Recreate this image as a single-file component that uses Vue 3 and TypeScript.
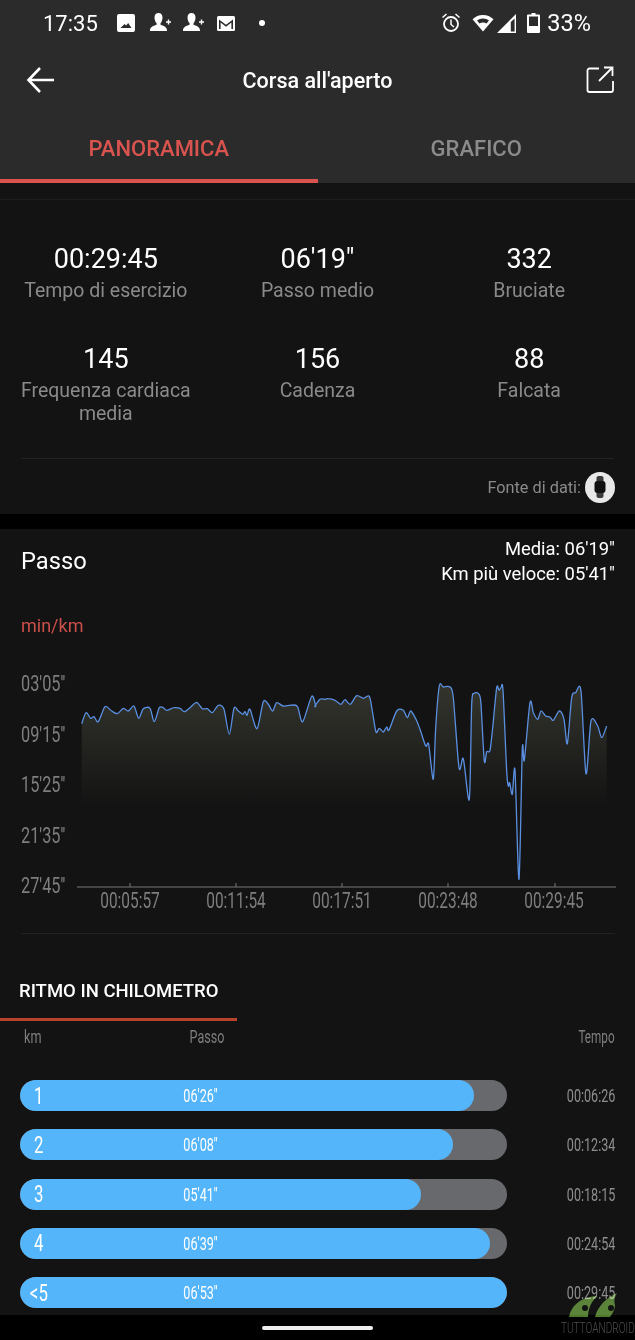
<template>
  <div class="page">
    <header class="top">
      <div class="status">
        <span class="clock">17:35</span>
        <svg class="ic ic-image" width="18" height="18" viewBox="0 0 18 18">
          <path fill="#fff" fill-rule="evenodd" d="M2 0h14a2 2 0 0 1 2 2v14a2 2 0 0 1-2 2H2a2 2 0 0 1-2-2V2a2 2 0 0 1 2-2zM3.500 14h11L11.200 9l-2.100 2.600L7.600 10z" />
        </svg>
        <svg v-for="n in 2" :key="n" class="ic ic-person" width="24" height="22" viewBox="0 0 24 22">
          <path fill="#fff" d="M9.500 1c2.600 0 4 2 4 4.600 0 2.400-.9 4.600-2 5.600v1.600c2 .9 6 1.600 6.500 5.200v1H1v-1c.4-3.600 4.600-4.300 6.600-5.200v-1.600c-1.200-1-2.100-3.200-2.100-5.600C5.500 3 6.900 1 9.500 1z" />
          <path stroke="#fff" stroke-width="1.400" d="M17 10h5M19.500 7.500v5" />
        </svg>
        <svg class="ic ic-mail" width="20" height="17" viewBox="0 0 20 17">
          <rect x="1" y="1" width="18" height="15" rx="1.500" fill="#fff" />
          <path fill="#2b2b2b" d="M3 14V4.500L10 9.800l7-5.300V14h-1.600V7.500L10 11.700 4.600 7.500V14z" />
        </svg>
        <span class="dot"></span>
        <span class="spacer"></span>
        <svg class="ic" width="20" height="22" viewBox="0 0 20 22">
          <circle cx="10" cy="12" r="7" fill="none" stroke="#fff" stroke-width="1.800" />
          <path fill="none" stroke="#fff" stroke-width="1.500" d="M10 7.500V12.500L13 15M1.500 5.500L5.500 2M18.500 5.500L14.500 2" />
        </svg>
        <svg class="ic ic-wifi" width="22" height="18" viewBox="0 0 22 18">
          <path fill="#fff" fill-rule="evenodd" d="M11 1C6.800 1 3.500 2.500.5 5.200L11 17.500 21.500 5.200C18.500 2.500 15.200 1 11 1zM5 6.500C6.700 5.200 8.700 4.500 11 4.500s4.300.7 6 2L14.500 9.500c-1-.7-2.200-1-3.500-1s-2.500.3-3.500 1z" />
        </svg>
        <svg class="ic ic-signal" width="19" height="19" viewBox="0 0 19 19">
          <path fill="#fff" d="M19 0V19H0zM17.600 4.500L13.800 8V17.500h3.800z" fill-rule="evenodd" />
        </svg>
        <svg class="ic ic-battery" width="13" height="20" viewBox="0 0 13 20">
          <path fill="#fff" fill-rule="evenodd" d="M4.500 0h4v1.500H12a1 1 0 0 1 1 1V19a1 1 0 0 1-1 1H1a1 1 0 0 1-1-1V2.500a1 1 0 0 1 1-1h3.500zM2 3.500V13h9V3.500z" />
        </svg>
        <span class="battery">33%</span>
      </div>
      <div class="toolbar">
        <svg class="back" width="30" height="28" viewBox="0 0 30 28">
          <path fill="none" stroke="#fff" stroke-width="2.600" d="M28 14H3M14 2L2.500 14 14 26" />
        </svg>
        <h1>Corsa all'aperto</h1>
        <svg class="share" width="28" height="28" viewBox="0 0 28 28">
          <path fill="none" stroke="#fff" stroke-width="1.800" stroke-linejoin="round" d="M13 2.500H3.500a2 2 0 0 0-2 2V24a2 2 0 0 0 2 2H25a2 2 0 0 0 2-2V15" />
          <path fill="none" stroke="#fff" stroke-width="1.800" d="M13 15L26 2M18 1.500h8.500V10" />
        </svg>
      </div>
      <nav class="tabs">
        <span class="tab active">PANORAMICA</span>
        <span class="tab">GRAFICO</span>
      </nav>
    </header>

    <main class="content">
      <section class="card summary">
        <div class="stats">
          <div v-for="s in stats" :key="s.label" class="stat">
            <div class="stat-value">{{ s.value }}</div>
            <div class="stat-label">{{ s.label }}</div>
          </div>
        </div>
        <div class="source">
          <span>Fonte di dati:</span>
          <span class="watch">
            <svg width="12" height="22" viewBox="0 0 12 22">
              <rect x="2.500" y="0" width="7" height="22" rx="2" fill="#3a3a3a" />
              <rect x="0.500" y="5" width="11" height="12" rx="3" fill="#111" />
            </svg>
          </span>
        </div>
      </section>

      <section class="card pace">
        <div class="pace-head">
          <h2>Passo</h2>
          <div class="pace-info">
            <div>Media: 06'19"</div>
            <div>Km più veloce: 05'41"</div>
          </div>
        </div>
        <div class="unit">min/km</div>

        <div class="chart">
          <div class="y-labels">
            <span v-for="y in yLabels" :key="y" class="din din-left">{{ y }}</span>
          </div>
          <div class="plot">
            <svg width="539" height="230" viewBox="0 0 539 230">
              <defs>
                <linearGradient id="paceFill" gradientUnits="userSpaceOnUse" x1="0" y1="25" x2="0" y2="145">
                  <stop offset="0" stop-color="#33352d" />
                  <stop offset="1" stop-color="#33352d" stop-opacity="0" />
                </linearGradient>
              </defs>
              <path :d="areaPath" fill="url(#paceFill)" />
              <path :d="linePath" fill="none" stroke="#5b8fe0" stroke-width="1.300" />
              <path d="M0 226H539" stroke="#77787a" stroke-width="1" />
              <path
                v-for="t in ticks"
                :key="t"
                :d="`M${t} 222V226`"
                stroke="#77787a" />
            </svg>
            <div class="x-labels">
              <span v-for="x in xLabels" :key="x" class="din">{{ x }}</span>
            </div>
          </div>
        </div>
        <div class="rule"></div>

        <h3 class="section-tab"><span>RITMO IN CHILOMETRO</span></h3>
        <div class="km-head">
          <span class="din din-left">km</span>
          <span class="din pace-col">Passo</span>
          <span class="din din-right time-col">Tempo</span>
        </div>
        <div class="km-list">
          <div v-for="r in rows" :key="r.km" class="km-row">
            <div class="track">
              <div class="fill" :style="{ width: r.fill + 'px' }"></div>
              <span class="km-num"><span class="din">{{ r.km }}</span></span>
              <span class="km-pace"><span class="din">{{ r.pace }}</span></span>
            </div>
            <span class="km-time"><span class="din din-right">{{ r.time }}</span></span>
          </div>
        </div>
      </section>
    </main>

    <footer class="nav"><span class="pill"></span></footer>

    <div class="watermark">
      <svg width="50" height="27" viewBox="0 0 50 27">
        <path fill="#4e7a2a" d="M1 27C3 16 12 9 22 7c3-.6 5-1 7-1-5 5-9 12-9 21z" />
        <path fill="#4e7a2a" d="M27 27C30 16 38 8 49 3c-3 5-3 8-2 12 0 4-2 8-5 12z" />
        <circle cx="17" cy="18" r="3" fill="#000" />
        <circle cx="43" cy="18" r="3" fill="#000" />
      </svg>
      <span class="din">TUTTOANDROID</span>
    </div>
  </div>
</template>

<script setup lang="ts">
const stats = [
  { value: '00:29:45', label: 'Tempo di esercizio' },
  { value: "06'19\"", label: 'Passo medio' },
  { value: '332', label: 'Bruciate' },
  { value: '145', label: 'Frequenza cardiaca media' },
  { value: '156', label: 'Cadenza' },
  { value: '88', label: 'Falcata' },
];

const yLabels = ["03'05''", "09'15''", "15'25''", "21'35''", "27'45''"];
const xLabels = ['00:05:57', '00:11:54', '00:17:51', '00:23:48', '00:29:45'];
const ticks = [53, 159, 265, 371, 478];

const rows = [
  { km: '1', pace: "06'26''", time: '00:06:26', fill: 454 },
  { km: '2', pace: "06'08''", time: '00:12:34', fill: 433 },
  { km: '3', pace: "05'41''", time: '00:18:15', fill: 401 },
  { km: '4', pace: "06'39''", time: '00:24:54', fill: 470 },
  { km: '<5', pace: "06'53''", time: '00:29:45', fill: 487 },
];

// traced from the reference at 3x, [x, y] of the two halves of the plot
const left = [
  [245, 188], [258, 155], [272, 172], [282, 167], [295, 182], [315, 137], [335, 150], [352, 158],
  [370, 142], [385, 150], [402, 135], [416, 172], [430, 143], [450, 142], [463, 182], [478, 140],
  [490, 140], [500, 148], [522, 140], [540, 142], [553, 152], [570, 140], [590, 124], [607, 143],
  [622, 143], [637, 155], [655, 133], [672, 145], [688, 220], [702, 142], [715, 150], [728, 160],
  [735, 152], [741, 163], [750, 145], [771, 203], [790, 122], [805, 130], [818, 150], [830, 125],
  [850, 135], [880, 132], [893, 138], [908, 182], [935, 106], [947, 135],
];
const right = [
  [0, 135], [15, 115], [30, 115], [40, 113], [60, 118], [78, 130], [90, 116], [106, 130],
  [125, 104], [145, 112], [163, 106], [172, 150], [183, 213], [193, 202], [205, 213], [215, 198],
  [222, 207], [245, 150], [265, 148], [277, 170], [287, 150], [303, 175], [315, 205], [332, 255],
  [341, 250], [355, 355], [362, 200], [373, 75], [385, 78], [405, 78], [415, 110], [432, 320],
  [445, 293], [463, 415], [470, 130], [478, 97], [492, 100], [498, 130], [508, 300], [515, 272],
  [525, 268], [533, 200], [545, 80], [552, 88], [558, 80], [564, 88], [575, 330], [580, 375],
  [584, 365], [592, 400], [600, 328], [612, 655], [622, 265], [628, 298], [645, 125], [655, 155],
  [668, 175], [678, 150], [692, 165], [705, 168], [715, 178], [733, 150], [747, 175], [757, 248],
  [770, 110], [782, 95], [798, 90], [813, 338], [828, 180], [848, 195], [860, 230], [875, 195],
];

// plot svg sits at x=77, y=660 of the page
const points = [
  ...left.map(([x, y]) => [x / 3 - 77, y / 3]),
  ...right.map(([x, y]) => [315 + x / 3 - 77, y / 3]),
];

const fmt = (n: number) => n.toFixed(1);

const smooth = (pts: number[][]) => {
  let d = `M${fmt(pts[0][0])} ${fmt(pts[0][1])}`;
  for (let i = 0; i < pts.length - 1; i++) {
    const p0 = pts[Math.max(i - 1, 0)];
    const p1 = pts[i];
    const p2 = pts[i + 1];
    const p3 = pts[Math.min(i + 2, pts.length - 1)];
    const k = 0.14;
    d += `C${fmt(p1[0] + (p2[0] - p0[0]) * k)} ${fmt(p1[1] + (p2[1] - p0[1]) * k)} ${fmt(p2[0] - (p3[0] - p1[0]) * k)} ${fmt(p2[1] - (p3[1] - p1[1]) * k)} ${fmt(p2[0])} ${fmt(p2[1])}`;
  }
  return d;
};

const linePath = smooth(points);
const areaPath = `${linePath}L${fmt(points[points.length - 1][0])} 150L${fmt(points[0][0])} 150Z`;
</script>

<style>
html,
body {
  margin: 0;
  background: #000;
}
</style>

<style scoped>
.page {
  position: relative;
  width: 635px;
  height: 1340px;
  overflow: hidden;
  display: flex;
  flex-direction: column;
  background: #000;
  color: #fff;
  font-family: Roboto, 'Liberation Sans', sans-serif;
}

/* no condensed face installed, so the DIN-like labels are squeezed */
.din {
  display: inline-block;
  white-space: nowrap;
  transform: scaleX(0.7);
}

.din-left {
  transform-origin: left center;
}

.din-right {
  transform-origin: right center;
}

.top {
  background: #2b2b2b;
  height: 183px;
  flex: none;
  display: flex;
  flex-direction: column;
}

.status {
  height: 46px;
  display: flex;
  align-items: center;
  padding: 0 44px 0 43px;
  font-size: 22px;
}

.clock {
  width: 74px;
}

.ic {
  display: block;
  flex: none;
}

.ic-person {
  margin-left: 10px;
  margin-right: -1px;
}

.ic-image + .ic-person {
  margin-left: 14px;
}

.ic-mail {
  margin-left: 11px;
}

.dot {
  width: 6px;
  height: 6px;
  border-radius: 50%;
  background: #fff;
  margin-left: 23px;
}

.spacer {
  flex: 1;
}

.ic-wifi {
  margin-left: 11px;
}

.ic-signal {
  margin-left: 3px;
}

.ic-battery {
  margin-left: 11px;
}

.battery {
  margin-left: 7px;
  font-size: 23.500px;
}

.toolbar {
  height: 68px;
  display: grid;
  grid-template-columns: 1fr auto 1fr;
  align-items: center;
  padding: 0 21px;
}

.toolbar h1 {
  margin: 0;
  font-size: 21.500px;
  font-weight: 500;
}

.back {
  margin-left: 5px;
}

.share {
  justify-self: end;
}

.tabs {
  flex: 1;
  display: grid;
  grid-template-columns: 1fr 1fr;
}

.tab {
  display: flex;
  align-items: center;
  justify-content: center;
  font-size: 22px;
  font-weight: 500;
  color: #8b8b8b;
  padding-top: 4px;
  border-bottom: 4px solid transparent;
}

.tab.active {
  color: #d9534f;
  border-bottom-color: #d9534f;
}

.content {
  flex: 1;
  display: flex;
  flex-direction: column;
  gap: 15px;
}

.card {
  background: #131313;
}

.summary {
  height: 331px;
  box-sizing: border-box;
}

.summary::before {
  content: '';
  display: block;
  height: 1px;
  margin-top: 16px;
  background: #1e1e1e;
}

.stats {
  display: grid;
  grid-template-columns: repeat(3, 1fr);
  grid-template-rows: 100px auto;
  height: 259px;
  padding-top: 42px;
  box-sizing: border-box;
  position: relative;
}

.stats::after {
  content: '';
  position: absolute;
  left: 21px;
  right: 21px;
  bottom: 0;
  height: 1px;
  background: #222;
}

.stat {
  text-align: center;
}

.stat-value {
  font-size: 27px;
  line-height: 34px;
}

.stat-label {
  font-size: 19.500px;
  line-height: 23px;
  margin-top: 3px;
  color: #8a8a8a;
  padding: 0 12px;
}

.source {
  display: flex;
  align-items: center;
  justify-content: flex-end;
  gap: 4px;
  height: 56px;
  padding-right: 20px;
  font-size: 16.300px;
  color: #8a8a8a;
}

.watch {
  width: 30px;
  height: 31px;
  border-radius: 50%;
  background: #e8e8e8;
  display: flex;
  align-items: center;
  justify-content: center;
}

.pace {
  flex: 1;
  padding: 0 20px 0 21px;
  overflow: hidden;
}

.pace-head {
  display: flex;
  justify-content: space-between;
  align-items: center;
  padding-top: 7px;
}

.pace-head h2 {
  margin: 0;
  font-size: 23.700px;
  font-weight: 400;
}

.pace-info {
  font-size: 18.400px;
  line-height: 25px;
  text-align: right;
}

.unit {
  margin-top: 28px;
  font-size: 18px;
  line-height: 24px;
  color: #c9504b;
}

.chart {
  display: grid;
  grid-template-columns: 56px 539px;
  margin-top: 23px;
  height: 261px;
}

.y-labels {
  display: flex;
  flex-direction: column;
  justify-content: space-between;
  align-items: flex-start;
  height: 224px;
  padding-top: 12px;
  font-size: 22px;
  line-height: 22px;
  color: #7e7e7e;
}

.y-labels .din {
  transform: scaleX(0.74);
}

.plot svg {
  display: block;
}

.x-labels {
  display: flex;
  margin-top: -1px;
  font-size: 22px;
  line-height: 22px;
  color: #7e7e7e;
}

.x-labels span {
  width: 106px;
  text-align: center;
}

.rule {
  height: 1px;
  background: #222;
  margin-top: 11px;
}

.section-tab {
  margin: 0 0 0 -21px;
  padding-top: 43px;
  font-size: 18.500px;
  font-weight: 500;
  line-height: 28px;
}

.section-tab span {
  display: block;
  width: 237px;
  box-sizing: border-box;
  padding: 0 0 13px 19px;
  border-bottom: 3px solid #b8432c;
  white-space: nowrap;
}

.km-head {
  display: grid;
  grid-template-columns: 76px 220px 1fr;
  height: 59px;
  font-size: 18px;
  line-height: 32px;
  color: #7e7e7e;
}

.km-head > :first-child {
  margin-left: 3px;
}

.pace-col {
  text-align: center;
}

.km-head .time-col {
  justify-self: end;
  transform: scaleX(0.65);
}

.km-list {
  display: flex;
  flex-direction: column;
  gap: 18.250px;
  margin-left: -1px;
}

.km-row {
  display: flex;
  align-items: center;
  justify-content: space-between;
}

.track {
  position: relative;
  width: 487px;
  height: 31px;
  border-radius: 16px;
  background: #68696c;
  display: flex;
  align-items: center;
  overflow: hidden;
}

.fill {
  position: absolute;
  top: 0;
  bottom: 0;
  left: 0;
  border-radius: 16px;
  background: #55b5fb;
}

.km-num {
  position: relative;
  width: 38px;
  text-align: center;
  font-size: 24px;
}

.km-pace {
  position: absolute;
  left: 130px;
  width: 100px;
  text-align: center;
  font-size: 18px;
}

.km-time {
  font-size: 18px;
  color: #8e8e8e;
}

.nav {
  height: 25px;
  flex: none;
  background: #000;
  display: flex;
  align-items: center;
  justify-content: center;
}

.pill {
  width: 111px;
  height: 4px;
  border-radius: 2px;
  background: #eee;
}

.watermark {
  position: absolute;
  left: 561px;
  top: 1290px;
  width: 68px;
  display: flex;
  flex-direction: column;
  align-items: flex-start;
  font-size: 15px;
  line-height: 22px;
  color: #4f4f4f;
  font-weight: 300;
  mix-blend-mode: screen;
}

.watermark svg {
  display: block;
  margin-left: 7px;
}

.watermark .din {
  transform: scaleX(0.67);
  transform-origin: left center;
}
</style>
